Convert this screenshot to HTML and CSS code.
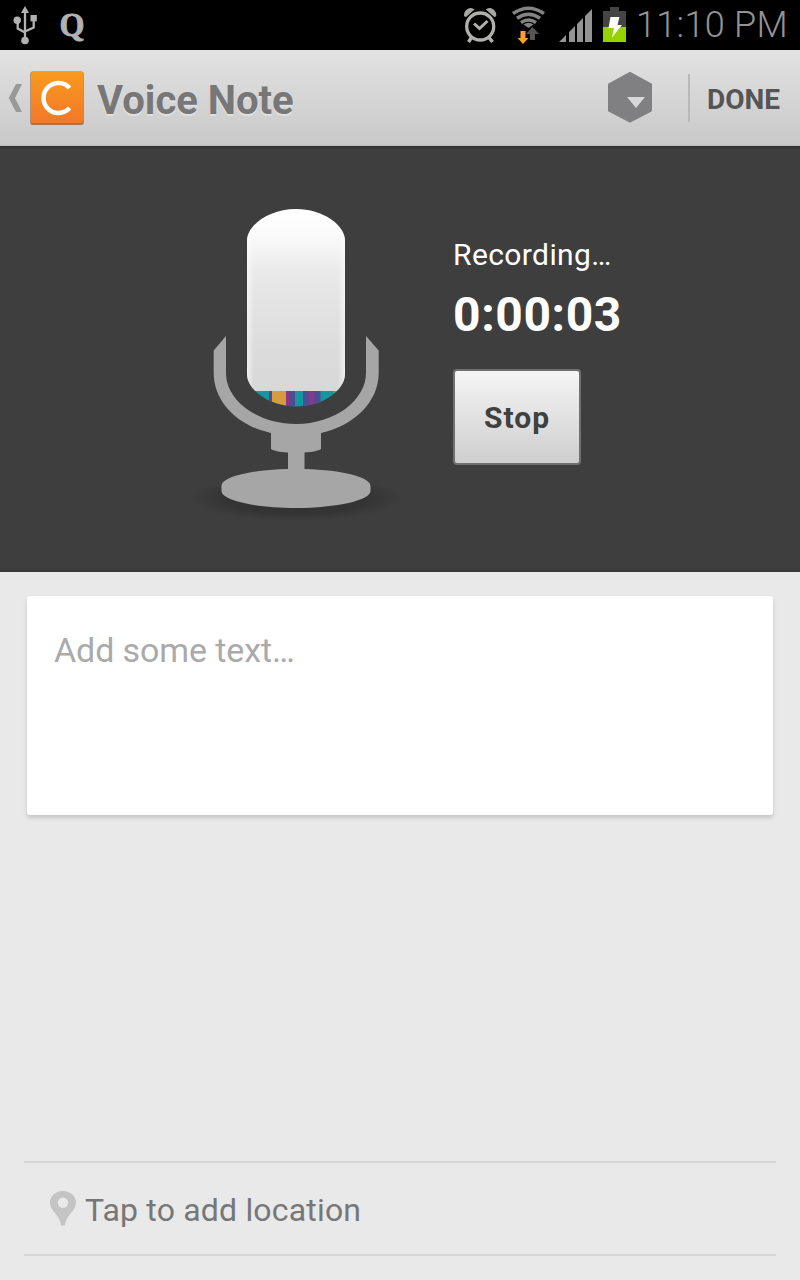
FILE: index.html
```html
<!DOCTYPE html>
<html lang="en">
<head>
<meta charset="utf-8">
<title>Voice Note</title>
<link rel="stylesheet" href="styles.css">
</head>
<body>
<div class="screen">
  <div class="status">
    <svg class="status-left" viewBox="0 0 100 50" width="100" height="50">
      <g fill="#b2b2b2" stroke="none">
        <path d="M25 6l4 7h-8z"/><circle cx="17.200" cy="20.200" r="3.700"/><rect x="30.500" y="15" width="6.300" height="6.300"/><circle cx="25" cy="40.500" r="3.800"/>
      </g>
      <path d="M25 10v29M17.700 21v7.500l7.300 4M33.700 19v8.500l-8.700 4" fill="none" stroke="#b2b2b2" stroke-width="2.300"/>
      <text class="q-mark" x="59.500" y="35.500" textLength="25" lengthAdjust="spacingAndGlyphs">Q</text>
    </svg>
    <svg class="status-right" viewBox="460 0 170 50" width="170" height="50">
      <g fill="none" stroke="#b0b1ae">
        <circle cx="480.200" cy="26.500" r="13.500" stroke-width="3.300"/>
        <path d="M474 23.500l5.500 5 8-7.500" stroke-width="3"/>
        <path d="M471.500 37.500l-3 4.500M489 37.500l3.500 4.500" stroke-width="3.500"/>
      </g>
      <path d="M464 15.500q0-6 6-7.500 2.500-.5 4.500 1.500l-8.500 7.500q-2-.5-2-1.500zM496.300 15.500q0-6-6-7.500-2.500-.5-4.500 1.500l8.500 7.500q2-.5 2-1.500z" fill="#a5a5a2"/>
      <g fill="none" stroke="#838383" stroke-width="3.500">
        <path d="M513 13.500q15.500-10.500 31 0M517 18.300q11.500-8 23 0M521 22.700q7.500-5.500 15 0"/>
      </g>
      <path d="M523.500 24.500q5-3.500 10 0l-5 3.500z" fill="#838383"/>
      <path d="M520.500 31h5v7h3l-5.500 6-5.500-6h3z" fill="#ff9d2e"/>
      <path d="M532.500 27l6.500 7h-4v6h-5v-6h-4z" fill="#555"/>
      <path d="M559 42l7-7v7zM569 42V32l6-6v16zM577 42V24l6-6v24zM585 42V16l7-7v33z" fill="#949494"/>
      <path d="M603 11h7V7h9v4h7v16h-23z" fill="#444"/><path d="M603 27h23v15h-23z" fill="#95d300"/>
      <path d="M610.500 17h9l-2 8h4.500l-10 12.500 2-9.500h-5.500z" fill="#fff"/>
    </svg>
    <span class="clock">11:10 PM</span>
  </div>
  <header class="bar">
    <svg class="brand" viewBox="0 66 90 64" width="90" height="64">
      <defs><linearGradient id="logo" x2="0" y2="1"><stop stop-color="#f99a1d"/><stop offset="1" stop-color="#f27829"/></linearGradient></defs>
      <path d="M16 84h6l-7 14 7 14h-6l-7.200-14z" fill="#999"/>
      <rect x="30.300" y="71.500" width="53.500" height="53.500" rx="2.500" fill="#a67650"/>
      <rect x="31" y="71.500" width="52.300" height="51.500" rx="2" fill="url(#logo)"/>
      <path d="M69.600 87.900a15 15 0 1 0 0 20.200" fill="none" stroke="#fff" stroke-width="4.500"/>
    </svg>
    <h1 class="title">Voice Note</h1>
    <svg class="hex" viewBox="606 71 48 54" width="48" height="54">
      <path d="M630 73l21 11.500v26L630 121.500l-21-11v-26z" fill="#808082" stroke="#808082" stroke-width="2" stroke-linejoin="round"/>
      <path d="M627 97h18l-9 11z" fill="#d8d8d8"/>
    </svg>
    <button class="done"><span>DONE</span></button>
  </header>
  <section class="recorder">
    <svg class="mic" viewBox="184 200 226 330" width="226" height="330">
      <defs>
        <linearGradient id="body" gradientUnits="userSpaceOnUse" x1="0" y1="209" x2="0" y2="391"><stop stop-color="#fff"/><stop offset=".15" stop-color="#fafafa"/><stop offset=".35" stop-color="#e9e9e9"/><stop offset=".75" stop-color="#dcdcdc"/><stop offset="1" stop-color="#d8d8d8"/></linearGradient>
        <linearGradient id="edge"><stop stop-color="#fff" stop-opacity=".6"/><stop offset=".07" stop-color="#fff" stop-opacity="0"/><stop offset=".93" stop-color="#fff" stop-opacity="0"/><stop offset="1" stop-color="#fff" stop-opacity=".6"/></linearGradient>
        <radialGradient id="shadow"><stop stop-color="#303030"/><stop offset=".68" stop-color="#343434"/><stop offset="1" stop-color="#3e3e3e"/></radialGradient>
        <clipPath id="capsule"><path d="M247 241c0-16 22-32 49-32s49 16 49 32v133c0 16-22 32.500-49 32.500S247 390 247 374z"/></clipPath>
      </defs>
      <ellipse cx="296" cy="498" rx="106" ry="23" fill="url(#shadow)"/>
      <g clip-path="url(#capsule)">
        <rect x="247" y="208" width="98" height="183" fill="url(#body)"/>
        <rect x="247" y="208" width="98" height="183" fill="url(#edge)"/>
        <path d="M247 391h98v16h-98z" fill="#1695a3"/>
        <path d="M269 391h3v16h-3zM289 391h6v16h-6zM303 391h6v16h-6zM314 391h6.500v16h-6.500z" fill="#504c91"/>
        <path d="M272 391h14v16h-14z" fill="#d99b40"/>
        <path d="M286 391h3v16h-3zM309 391h5v16h-5z" fill="#8e348b"/>
        <path d="M333 391h9v2h-9z" fill="#50a16e"/>
      </g>
      <path d="M226 336v37c0 27 31 51 70 51s70-24 70-51v-37l12.700 14.500v22.500c0 29-25 53-57.700 60v16c-3 2-8 3-16.500 3.500V469c38 1 66 8 66 17v5c0 9-33 17-74.500 17s-74.500-8-74.500-17v-5c0-9 28-16 66.500-17v-16.500c-9-.5-14-1.500-17-3.500v-16c-33-7-57.300-31-57.300-60v-22.500z" fill="#a6a6a6"/>
    </svg>
    <div class="info">
      <div class="state">Recording…</div>
      <div class="timer">0:00:03</div>
      <button class="stop"><span>Stop</span></button>
    </div>
  </section>
  <main class="content">
    <div class="note"><span>Add some text…</span></div>
    <div class="location">
      <svg viewBox="48 1188.500 30 40" width="30" height="40"><path fill-rule="evenodd" d="M63 1190.500c7.500 0 13 5 13 11.500 0 8-8 11-10.500 20l-.6 3h-3.800l-.6-3c-2.500-9-10.500-12-10.500-20 0-6.500 5.500-11.500 13-11.500zM63 1197a5.200 5.200 0 1 0 0 10.400 5.200 5.200 0 0 0 0-10.400z" fill="#c4c4c4"/></svg>
      <span>Tap to add location</span>
    </div>
  </main>
</div>
</body>
</html>
```
FILE: styles.css
```css
* { box-sizing: border-box; }
body { margin: 0; font-family: Roboto, "Liberation Sans", sans-serif; }
button { font: inherit; border: 0; background: none; padding: 0; }
svg { display: block; flex: none; }
span, h1, .state, .timer { white-space: nowrap; }
.screen { width: 800px; height: 1280px; display: flex; flex-direction: column; background: #e9e9e9; overflow: hidden; }
.status { height: 50px; flex: none; display: flex; background: #000; }
.status-right { margin-left: 360px; }
.q-mark { font: bold 33px "Liberation Serif", serif; fill: #b2b2b2; stroke: #b2b2b2; stroke-width: 0.8px; }
.clock { margin-left: 6px; font-size: 36px; line-height: 50px; color: #949494; font-weight: 350; letter-spacing: 0.3px; }
.bar { height: 96px; flex: none; display: flex; align-items: center; background: linear-gradient(#e2e2e2, #c9c9c9); border-bottom: 1px solid #bcbcbc; }
.title { margin: 6px 0 0 7px; width: 509px; font-size: 40px; line-height: 48px; font-weight: 700; color: #777; text-shadow: 0 2px 1px #e2e2e2; }
.done { height: 48px; margin-left: 34px; padding: 3px 0 0 17px; border-left: 2px solid #b9b9b9; font-size: 28px; font-weight: 700; color: #555; }
.recorder { height: 426px; flex: none; padding: 54px 0 0 184px; display: flex; background: linear-gradient(#303030, #3e3e3e 4px, #3e3e3e 422px, #383838); }
.info { margin-left: 43px; padding-top: 37px; color: #fff; }
.state { font-size: 30px; line-height: 36px; letter-spacing: 0.4px; }
.timer { margin-top: 13px; font-size: 48px; line-height: 58px; font-weight: 700; letter-spacing: 0.6px; }
.stop { display: block; width: 128px; height: 96px; margin-top: 25px; border: 2px solid #707070; border-radius: 4px; background: linear-gradient(#f5f5f5, #cecece); color: #404040; font-size: 30px; font-weight: 700; letter-spacing: 1px; }
.content { flex: 1; display: flex; flex-direction: column; justify-content: space-between; padding: 24px; }
.note { height: 219px; margin: 0 3px; padding: 34px 27px; border-radius: 3px; background: #fff; box-shadow: 0 3px 4px rgba(0,0,0,.15); color: #aaa; font-size: 34px; line-height: 40px; letter-spacing: -0.1px; }
.location { height: 95px; padding-left: 24px; display: flex; align-items: center; border-top: 2px solid #d6d6d6; border-bottom: 2px solid #d6d6d6; color: #777; font-size: 32px; letter-spacing: 0.18px; }
.location span { margin: 2px 0 0 7px; }
```
